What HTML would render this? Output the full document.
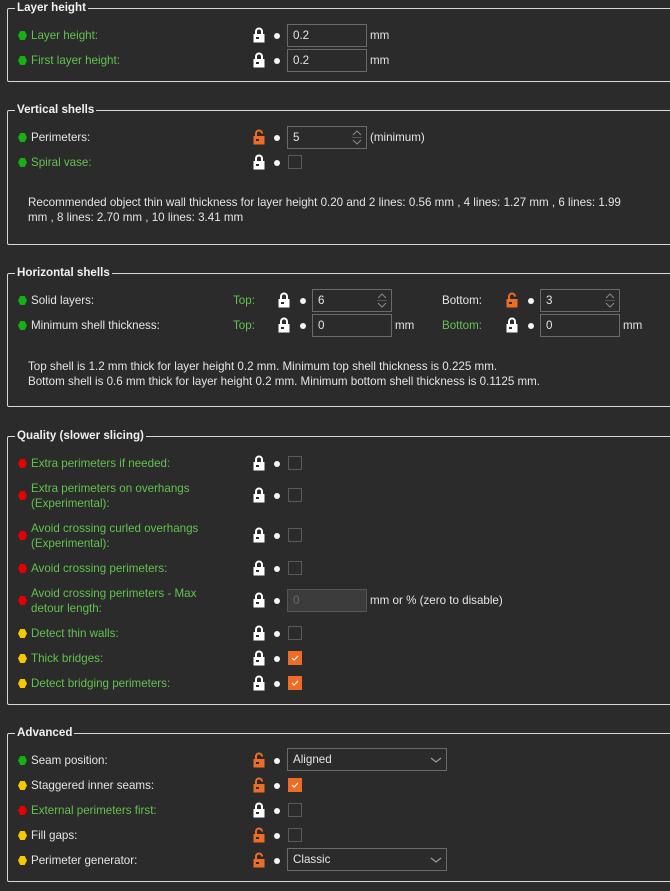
<!DOCTYPE html>
<html><head><meta charset="utf-8"><style>
*{margin:0;padding:0;box-sizing:border-box}
body{width:670px;height:891px;background:#2b2b2b;font-family:"Liberation Sans",sans-serif;font-size:11.6px;color:#e4e4e4;position:relative;overflow:hidden}
.a{position:absolute;white-space:nowrap;line-height:14px}
.box{position:absolute;left:7px;right:-10px;border:1px solid #d8d8d8;border-radius:2px}
.t{position:absolute;left:15px;font-weight:bold;color:#f0f0f0;background:#2b2b2b;padding:0 2px;line-height:14px}
.g{color:#62c24e}
.hx{position:absolute;width:9px;height:9px;clip-path:polygon(25% 0,75% 0,100% 50%,75% 100%,25% 100%,0 50%)}
.gr{background:#14b014}.rd{background:#e60000}.yl{background:#f5c800}
.dot{position:absolute;width:6px;height:6px;border-radius:50%;background:#f4f4f4}
.in{position:absolute;height:23px;border:1px solid #6a6a6a;background:#2b2b2b;padding:4px 5px;line-height:13px}
.cb{position:absolute;width:14px;height:14px;border:1px solid #5a5a5a}
.ck{background:#ee6d26;border-color:#ee6d26}
.lk{position:absolute}
.sp{position:absolute;right:4px;top:2px;width:10px;height:17px}
</style></head><body>
<svg width="0" height="0" style="position:absolute"><defs>
<symbol id="L" viewBox="0 0 12 16"><path d="M3 7V4.5a3 3 0 0 1 6 0V7" fill="none" stroke="#fff" stroke-width="2"/><rect x="0.5" y="7" width="11" height="8.5" fill="#fff"/><rect x="3" y="10" width="3" height="2" fill="#2b2b2b"/></symbol>
<symbol id="U" viewBox="0 0 12 16"><path d="M3 7V4.5a3 3 0 0 1 6 0" fill="none" stroke="#ee6d26" stroke-width="2"/><rect x="0.5" y="7" width="11" height="8.5" fill="#ee6d26"/><rect x="3" y="10" width="3" height="2" fill="#2b2b2b"/></symbol>
<symbol id="S" viewBox="0 0 10 17"><path d="M1 6l4-4 4 4M1 11l4 4 4-4" fill="none" stroke="#8a8a8a" stroke-width="1"/><path d="M0 8.5h10" stroke="#555"/></symbol>
<symbol id="C" viewBox="0 0 14 14"><path d="M3.5 7l2.5 2.5 4.5-5" fill="none" stroke="#fff" stroke-width="1.2"/></symbol>
<symbol id="D" viewBox="0 0 12 8"><path d="M1 2l5 4 5-4" fill="none" stroke="#9a9a9a" stroke-width="1.2"/></symbol>
</defs></svg>

<div class="box" style="top:8px;height:74px"></div><div class="t" style="top:1px">Layer height</div>
<div class="hx gr" style="left:18px;top:31px"></div><div class="a g" style="left:31px;top:29px">Layer height:</div>
<svg class="lk" style="left:253px;top:27px" width="12" height="16"><use href="#L"/></svg><div class="dot" style="left:274px;top:33px"></div>
<div class="in" style="left:287px;top:24px;width:80px">0.2</div><div class="a" style="left:370px;top:29px">mm</div>
<div class="hx gr" style="left:18px;top:56px"></div><div class="a g" style="left:31px;top:54px">First layer height:</div>
<svg class="lk" style="left:253px;top:52px" width="12" height="16"><use href="#L"/></svg><div class="dot" style="left:274px;top:58px"></div>
<div class="in" style="left:287px;top:49px;width:80px">0.2</div><div class="a" style="left:370px;top:54px">mm</div>

<div class="box" style="top:110px;height:135px"></div><div class="t" style="top:103px">Vertical shells</div>
<div class="hx gr" style="left:18px;top:133px"></div><div class="a" style="left:31px;top:131px">Perimeters:</div>
<svg class="lk" style="left:253px;top:129px" width="12" height="16"><use href="#U"/></svg><div class="dot" style="left:274px;top:135px"></div>
<div class="in" style="left:287px;top:126px;width:80px">5<svg class="sp" width="10" height="17"><use href="#S"/></svg></div><div class="a" style="left:370px;top:131px">(minimum)</div>
<div class="hx gr" style="left:18px;top:158px"></div><div class="a g" style="left:31px;top:156px">Spiral vase:</div>
<svg class="lk" style="left:253px;top:154px" width="12" height="16"><use href="#L"/></svg><div class="dot" style="left:274px;top:160px"></div>
<div class="cb" style="left:288px;top:155px"></div>
<div class="a" style="left:28px;top:196px">Recommended object thin wall thickness for layer height 0.20 and 2 lines: 0.56 mm , 4 lines: 1.27 mm , 6 lines: 1.99</div>
<div class="a" style="left:28px;top:211px">mm , 8 lines: 2.70 mm , 10 lines: 3.41 mm</div>

<div class="box" style="top:273px;height:134px"></div><div class="t" style="top:266px">Horizontal shells</div>
<div class="hx gr" style="left:18px;top:296px"></div><div class="a" style="left:31px;top:294px">Solid layers:</div>
<div class="a g" style="left:233px;top:294px">Top:</div>
<svg class="lk" style="left:278px;top:292px" width="12" height="16"><use href="#L"/></svg><div class="dot" style="left:300px;top:298px"></div>
<div class="in" style="left:312px;top:289px;width:80px">6<svg class="sp" width="10" height="17"><use href="#S"/></svg></div>
<div class="a" style="left:442px;top:294px">Bottom:</div>
<svg class="lk" style="left:506px;top:292px" width="12" height="16"><use href="#U"/></svg><div class="dot" style="left:528px;top:298px"></div>
<div class="in" style="left:540px;top:289px;width:80px">3<svg class="sp" width="10" height="17"><use href="#S"/></svg></div>
<div class="hx gr" style="left:18px;top:321px"></div><div class="a" style="left:31px;top:319px">Minimum shell thickness:</div>
<div class="a g" style="left:233px;top:319px">Top:</div>
<svg class="lk" style="left:278px;top:317px" width="12" height="16"><use href="#L"/></svg><div class="dot" style="left:300px;top:323px"></div>
<div class="in" style="left:312px;top:314px;width:80px">0</div><div class="a" style="left:395px;top:319px">mm</div>
<div class="a g" style="left:442px;top:319px">Bottom:</div>
<svg class="lk" style="left:506px;top:317px" width="12" height="16"><use href="#L"/></svg><div class="dot" style="left:528px;top:323px"></div>
<div class="in" style="left:540px;top:314px;width:80px">0</div><div class="a" style="left:623px;top:319px">mm</div>
<div class="a" style="left:28px;top:360px">Top shell is 1.2 mm thick for layer height 0.2 mm. Minimum top shell thickness is 0.225 mm.</div>
<div class="a" style="left:28px;top:375px">Bottom shell is 0.6 mm thick for layer height 0.2 mm. Minimum bottom shell thickness is 0.1125 mm.</div>

<div class="box" style="top:436px;height:269px"></div><div class="t" style="top:429px">Quality (slower slicing)</div>
<div class="hx rd" style="left:18px;top:459px"></div><div class="a g" style="left:31px;top:457px">Extra perimeters if needed:</div>
<svg class="lk" style="left:253px;top:455px" width="12" height="16"><use href="#L"/></svg><div class="dot" style="left:274px;top:461px"></div><div class="cb" style="left:288px;top:456px"></div>
<div class="hx rd" style="left:18px;top:491px"></div><div class="a g" style="left:31px;top:482px">Extra perimeters on overhangs</div><div class="a g" style="left:31px;top:497px">(Experimental):</div>
<svg class="lk" style="left:253px;top:487px" width="12" height="16"><use href="#L"/></svg><div class="dot" style="left:274px;top:493px"></div><div class="cb" style="left:288px;top:488px"></div>
<div class="hx rd" style="left:18px;top:531px"></div><div class="a g" style="left:31px;top:522px">Avoid crossing curled overhangs</div><div class="a g" style="left:31px;top:537px">(Experimental):</div>
<svg class="lk" style="left:253px;top:527px" width="12" height="16"><use href="#L"/></svg><div class="dot" style="left:274px;top:533px"></div><div class="cb" style="left:288px;top:528px"></div>
<div class="hx rd" style="left:18px;top:564px"></div><div class="a g" style="left:31px;top:562px">Avoid crossing perimeters:</div>
<svg class="lk" style="left:253px;top:560px" width="12" height="16"><use href="#L"/></svg><div class="dot" style="left:274px;top:566px"></div><div class="cb" style="left:288px;top:561px"></div>
<div class="hx rd" style="left:18px;top:596px"></div><div class="a g" style="left:31px;top:587px">Avoid crossing perimeters - Max</div><div class="a g" style="left:31px;top:602px">detour length:</div>
<svg class="lk" style="left:253px;top:592px" width="12" height="16"><use href="#L"/></svg><div class="dot" style="left:274px;top:598px"></div>
<div class="in" style="left:287px;top:589px;width:80px;background:#3c3c3c;color:#6a6a6a;border-color:#555">0</div><div class="a" style="left:370px;top:594px">mm or % (zero to disable)</div>
<div class="hx yl" style="left:18px;top:629px"></div><div class="a g" style="left:31px;top:627px">Detect thin walls:</div>
<svg class="lk" style="left:253px;top:625px" width="12" height="16"><use href="#L"/></svg><div class="dot" style="left:274px;top:631px"></div><div class="cb" style="left:288px;top:626px"></div>
<div class="hx yl" style="left:18px;top:654px"></div><div class="a g" style="left:31px;top:652px">Thick bridges:</div>
<svg class="lk" style="left:253px;top:650px" width="12" height="16"><use href="#L"/></svg><div class="dot" style="left:274px;top:656px"></div><svg class="cb ck" style="left:288px;top:651px" width="14" height="14"><use href="#C"/></svg>
<div class="hx yl" style="left:18px;top:679px"></div><div class="a g" style="left:31px;top:677px">Detect bridging perimeters:</div>
<svg class="lk" style="left:253px;top:675px" width="12" height="16"><use href="#L"/></svg><div class="dot" style="left:274px;top:681px"></div><svg class="cb ck" style="left:288px;top:676px" width="14" height="14"><use href="#C"/></svg>

<div class="box" style="top:733px;height:149px"></div><div class="t" style="top:726px">Advanced</div>
<div class="hx gr" style="left:18px;top:756px"></div><div class="a" style="left:31px;top:754px">Seam position:</div>
<svg class="lk" style="left:253px;top:752px" width="12" height="16"><use href="#U"/></svg><div class="dot" style="left:274px;top:758px"></div>
<div class="in" style="left:287px;top:748px;width:160px">Aligned<svg style="position:absolute;right:4px;top:7px" width="12" height="8"><use href="#D"/></svg></div>
<div class="hx yl" style="left:18px;top:781px"></div><div class="a" style="left:31px;top:779px">Staggered inner seams:</div>
<svg class="lk" style="left:253px;top:777px" width="12" height="16"><use href="#U"/></svg><div class="dot" style="left:274px;top:783px"></div><svg class="cb ck" style="left:288px;top:778px" width="14" height="14"><use href="#C"/></svg>
<div class="hx rd" style="left:18px;top:806px"></div><div class="a g" style="left:31px;top:804px">External perimeters first:</div>
<svg class="lk" style="left:253px;top:802px" width="12" height="16"><use href="#L"/></svg><div class="dot" style="left:274px;top:808px"></div><div class="cb" style="left:288px;top:803px"></div>
<div class="hx yl" style="left:18px;top:831px"></div><div class="a" style="left:31px;top:829px">Fill gaps:</div>
<svg class="lk" style="left:253px;top:827px" width="12" height="16"><use href="#U"/></svg><div class="dot" style="left:274px;top:833px"></div><div class="cb" style="left:288px;top:828px"></div>
<div class="hx yl" style="left:18px;top:856px"></div><div class="a" style="left:31px;top:854px">Perimeter generator:</div>
<svg class="lk" style="left:253px;top:852px" width="12" height="16"><use href="#U"/></svg><div class="dot" style="left:274px;top:858px"></div>
<div class="in" style="left:287px;top:848px;width:160px">Classic<svg style="position:absolute;right:4px;top:7px" width="12" height="8"><use href="#D"/></svg></div>
</body></html>
